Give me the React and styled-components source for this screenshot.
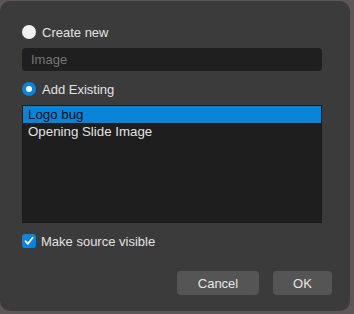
import styled, { createGlobalStyle } from 'styled-components';

const Global = createGlobalStyle`
  html, body { margin: 0; padding: 0; }
  body {
    width: 354px;
    height: 314px;
    overflow: hidden;
    background: #5c5658;
    font-family: "Liberation Sans", Arial, sans-serif;
  }
`;

const Dialog = styled.div`
  box-sizing: border-box;
  width: 350px;
  height: 310px;
  margin-top: 1px;
  background: #3b3b3b;
  border-radius: 10px;
  padding: 22px 22px 0 22px;
  display: flex;
  flex-direction: column;
  color: #e2e2e2;
  font-size: 13px;
`;

const OptionRow = styled.label`
  display: flex;
  align-items: center;
  gap: 6px;
  height: 18px;
`;

const Radio = styled.span`
  box-sizing: border-box;
  width: 14px;
  height: 14px;
  border-radius: 50%;
  background: ${(p) => (p.checked ? '#0a84dc' : '#f2f2f2')};
  display: flex;
  align-items: center;
  justify-content: center;
  &::after {
    content: '';
    width: 6px;
    height: 6px;
    border-radius: 50%;
    background: #fff;
    display: ${(p) => (p.checked ? 'block' : 'none')};
  }
`;

const TextField = styled.div`
  box-sizing: border-box;
  height: 23px;
  margin: 7px 0 9px 0;
  width: 300px;
  background: #1f1f1f;
  border-radius: 4px;
  padding: 0 9px;
  display: flex;
  align-items: center;
  color: #757575;
`;

const ListBox = styled.div`
  box-sizing: border-box;
  margin-top: 7px;
  width: 300px;
  height: 118px;
  background: #1e1e1e;
  border: 1px solid #1a1a1a;
`;

const ListItem = styled.div`
  height: 17px;
  display: flex;
  align-items: center;
  padding-left: 5px;
  font-size: 13.3px;
  background: ${(p) => (p.selected ? '#0a84d8' : 'transparent')};
  color: ${(p) => (p.selected ? '#0c0c0c' : '#e2e2e2')};
`;

const CheckRow = styled.label`
  display: flex;
  align-items: center;
  gap: 5px;
  margin-top: 11px;
  height: 14px;
`;

const Checkbox = styled.span`
  width: 14px;
  height: 14px;
  border-radius: 3px;
  background: #0a84dc;
  display: flex;
  align-items: center;
  justify-content: center;
`;

const Footer = styled.div`
  display: flex;
  justify-content: flex-end;
  gap: 14px;
  margin-top: 23px;
  margin-right: -4px;
`;

const Button = styled.button`
  height: 24px;
  width: ${(p) => p.w}px;
  border: 0;
  border-radius: 4px;
  background: #555555;
  color: #e6e6e6;
  font-family: inherit;
  font-size: 13px;
  padding: 0;
`;

export default function App() {
  return (
    <>
      <Global />
      <Dialog>
        <OptionRow>
          <Radio />
          Create new
        </OptionRow>
        <TextField>Image</TextField>
        <OptionRow>
          <Radio checked />
          Add Existing
        </OptionRow>
        <ListBox>
          <ListItem selected>Logo bug</ListItem>
          <ListItem>Opening Slide Image</ListItem>
        </ListBox>
        <CheckRow>
          <Checkbox>
            <svg width="10" height="10" viewBox="0 0 10 10">
              <path d="M1.5 5.2 L4 7.8 L8.6 1.8" fill="none" stroke="#fff" strokeWidth="1.8" strokeLinecap="round" strokeLinejoin="round" />
            </svg>
          </Checkbox>
          Make source visible
        </CheckRow>
        <Footer>
          <Button w={82}>Cancel</Button>
          <Button w={59}>OK</Button>
        </Footer>
      </Dialog>
    </>
  );
}
